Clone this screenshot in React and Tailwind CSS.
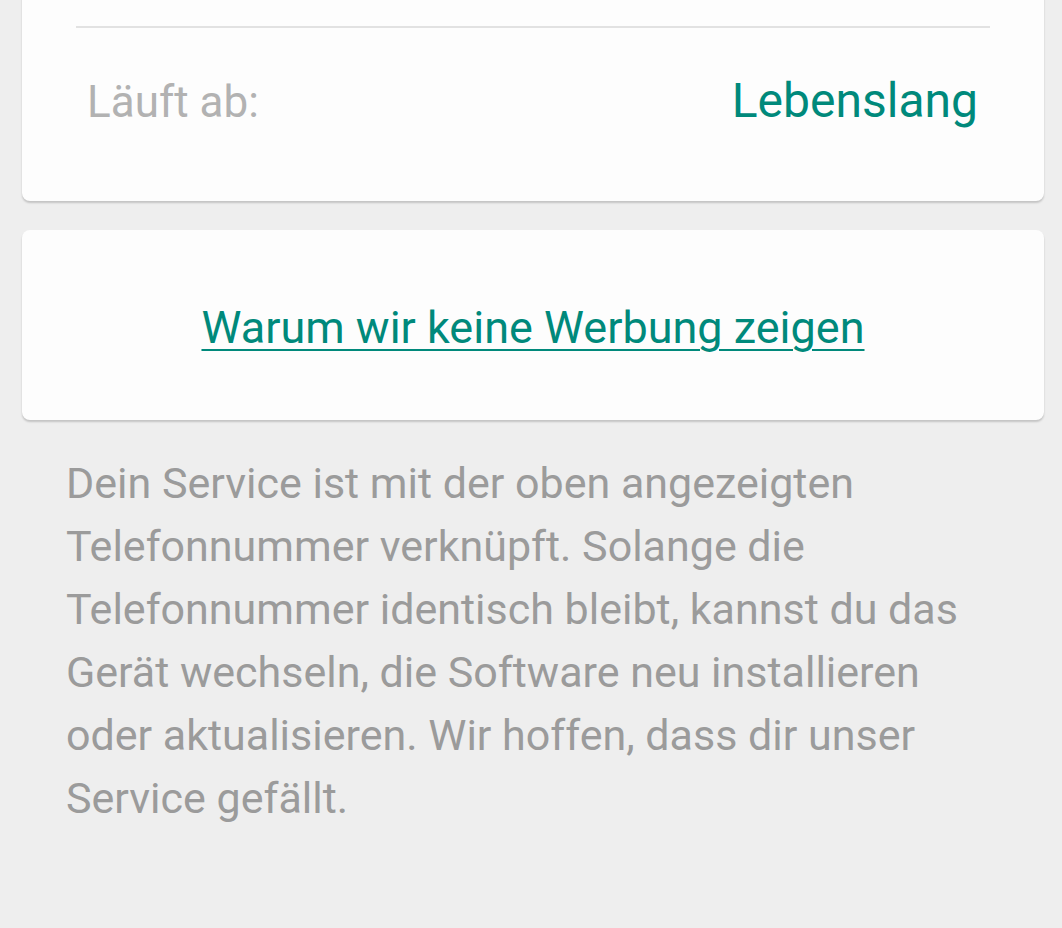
import React from "react";

function Card({ className = "", children }) {
  return (
    <div className={`ml-[22px] mr-[18px] rounded-lg bg-[#fdfdfd] shadow-[0_2px_2px_rgba(0,0,0,0.18)] ${className}`}>
      {children}
    </div>
  );
}

export default function App() {
  return (
    <div
      className="min-h-screen bg-[#eeeeee] overflow-hidden"
      style={{ fontFamily: "Roboto, 'Noto Sans', sans-serif" }}
    >
      {/* Expiry card (top is scrolled off) */}
      <Card className="-mt-[12px] pt-[38px]">
        <div className="mx-[54px] h-[2px] bg-[#e2e2e2]" />
        <div className="flex items-baseline justify-between pl-[65px] pr-[66px] pt-[45px] pb-[71px] leading-[56px]">
          <span className="text-[44px] text-[#b2b2b2]">Läuft ab:</span>
          <span className="text-[48px] text-[#00897b]">Lebenslang</span>
        </div>
      </Card>

      {/* Ads link */}
      <Card className="mt-[29px] pt-[70px] pb-[64px] text-center">
        <a
          href="#"
          className="text-[45px] leading-[56px] text-[#00897b] underline underline-offset-[6px] decoration-2"
        >
          Warum wir keine Werbung zeigen
        </a>
      </Card>

      <p className="px-[66px] pt-[32px] text-[43px] leading-[63px] text-[#9b9b9b]">
        Dein Service ist mit der oben angezeigten Telefonnummer verknüpft. Solange die
        Telefonnummer identisch bleibt, kannst du das Gerät wechseln, die Software neu
        installieren oder aktualisieren. Wir hoffen, dass dir unser Service gefällt.
      </p>
    </div>
  );
}
